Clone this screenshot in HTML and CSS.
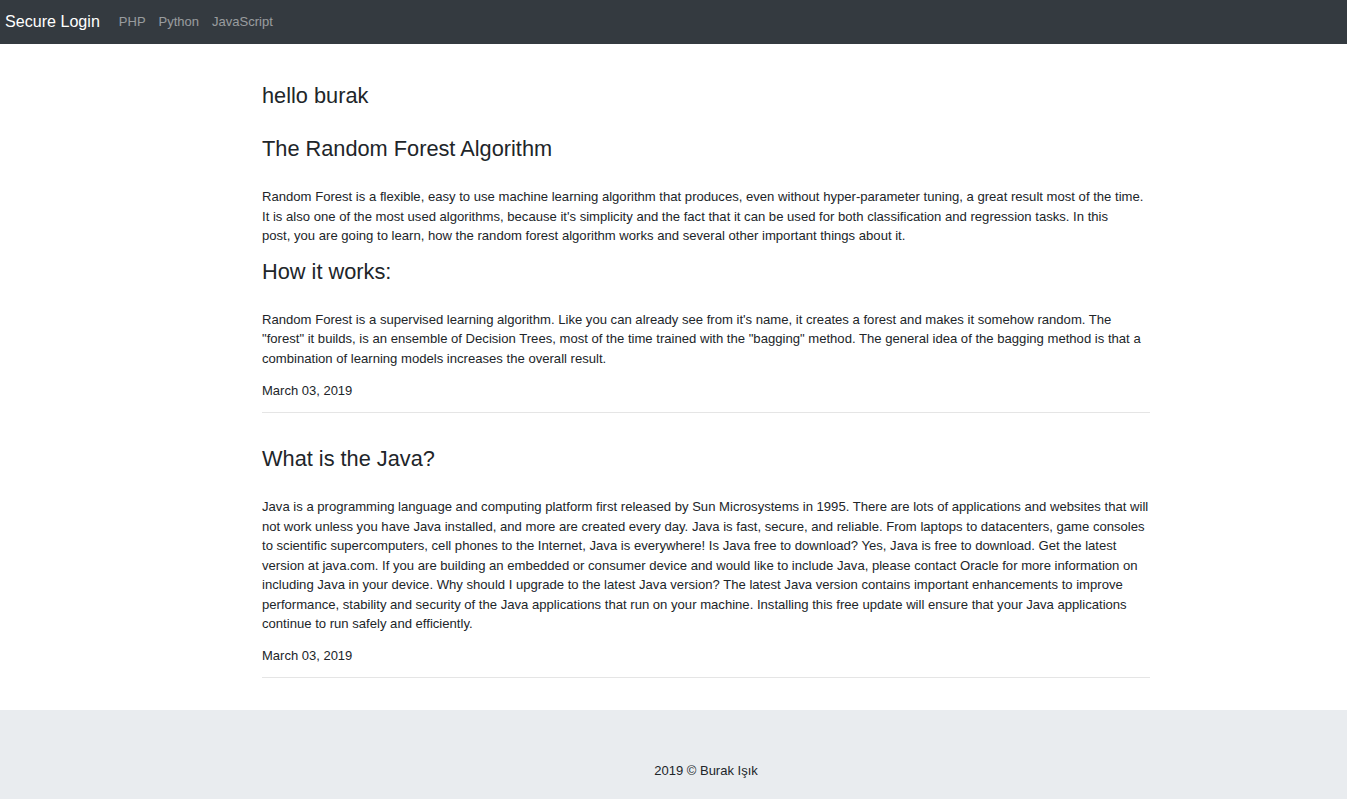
FILE: index.html
```html
<!DOCTYPE html>
<html lang="en">
<head>
<meta charset="utf-8">
<title>Secure Login</title>
<link rel="stylesheet" href="styles.css">
</head>
<body>
<nav class="navbar">
  <a class="brand" href="#">Secure Login</a>
  <ul class="nav-links">
    <li><a href="#">PHP</a></li>
    <li><a href="#">Python</a></li>
    <li><a href="#">JavaScript</a></li>
  </ul>
</nav>
<main class="content">
  <h1 class="greeting">hello burak</h1>
  <article class="post">
    <h2 class="post-title">The Random Forest Algorithm</h2>
    <p class="post-text">Random Forest is a flexible, easy to use machine learning algorithm that produces, even without hyper-parameter tuning, a great result most of the time. It is also one of the most used algorithms, because it's simplicity and the fact that it can be used for both classification and regression tasks. In this post,&nbsp;you are going to learn, how the random forest algorithm works and several other important things about it.</p>
    <h2 class="post-sub">How it works:</h2>
    <p class="post-text">Random Forest is a supervised learning algorithm. Like you can already see from it's name, it creates a forest and makes it somehow random. The "forest" it builds, is an ensemble of Decision Trees, most of the time trained with the "bagging" method. The general idea of the bagging method is that a combination of learning models increases the overall result.</p>
    <p class="post-date">March 03, 2019</p>
  </article>
  <article class="post">
    <h2 class="post-title">What is the Java?</h2>
    <p class="post-text">Java is a programming language and computing platform first released by Sun Microsystems in 1995. There are lots of applications and websites that will not work unless you have Java installed, and more are created every day. Java is fast, secure, and reliable. From laptops to datacenters, game consoles to scientific supercomputers, cell phones to the Internet, Java is everywhere! Is Java free to download? Yes, Java is free to download. Get the latest version at java.com. If you are building an embedded or consumer device and would like to include Java, please contact Oracle for more information on including Java in your device. Why should I upgrade to the latest Java version? The latest Java version contains important enhancements to improve performance, stability and security of the Java applications that run on your machine. Installing this free update will ensure that your Java applications continue to run safely and efficiently.</p>
    <p class="post-date">March 03, 2019</p>
  </article>
</main>
<footer class="footer">
  <p class="footer-text">2019 © Burak Işık</p>
</footer>
</body>
</html>
```
FILE: styles.css
```css
* { box-sizing: border-box; }
html, body { margin: 0; padding: 0; }
body {
  font-family: "Liberation Sans", Arial, sans-serif;
  font-size: 13px;
  line-height: 19.5px;
  color: #212529;
  background: #fff;
}
a { text-decoration: none; }
.navbar {
  height: 44px;
  background: #343a40;
  display: flex;
  align-items: center;
  padding: 0 5px;
}
.brand {
  color: #fff;
  font-size: 16.1px;
  margin-right: 19px;
}
.nav-links {
  display: flex;
  list-style: none;
  margin: 0;
  padding: 0;
  gap: 13px;
}
.nav-links a {
  color: rgba(255,255,255,0.5);
  font-size: 13px;
}
.content {
  width: 888px;
  margin-left: 262px;
  padding-top: 39px;
  padding-bottom: 32px;
}
.greeting {
  font-size: 21.75px;
  font-weight: 400;
  line-height: 26.4px;
  margin: 0 0 26.4px;
}
.post {
  border-bottom: 1px solid #e5e5e5;
  padding-bottom: 11.5px;
  margin-bottom: 33px;
}
.post-title, .post-sub {
  font-size: 21.75px;
  font-weight: 400;
  line-height: 26.4px;
  margin: 0 0 25px;
}
.post-sub { margin-top: 13px; margin-bottom: 24.6px; }
.post-text { margin: 0; font-size: 13.1px; }
.post-date { margin: 12.5px 0 0; }
.content .post:last-child { margin-bottom: 0; }
.footer {
  background: #e9ecef;
  height: 89px;
  padding-top: 51px;
}
.footer-text {
  margin: 0 0 0 262px;
  width: 888px;
  text-align: center;
}
```
